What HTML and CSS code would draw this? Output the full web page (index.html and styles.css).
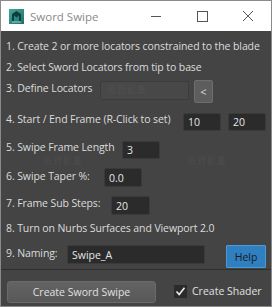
FILE: index.html
```html
<!DOCTYPE html>
<html>
<head>
<meta charset="utf-8">
<link rel="stylesheet" href="styles.css">
</head>
<body>
<div class="window">
  <div class="titlebar">
    <svg class="appicon" width="15" height="15" viewBox="0 0 15 15">
      <defs>
        <linearGradient id="g" x1="0" y1="0" x2="1" y2="1">
          <stop offset="0" stop-color="#3fa9a0"/>
          <stop offset="1" stop-color="#1f6e6a"/>
        </linearGradient>
      </defs>
      <rect width="15" height="15" fill="url(#g)"/>
      <path d="M3 12 V5 L7.5 2 L12 5 V12 H10 V6.5 L7.5 8.5 L5 6.5 V12 Z" fill="#143c3a"/>
      <rect x="3" y="12.5" width="9" height="1" fill="#8fd0c8"/>
    </svg>
    <span class="title">Sword Swipe</span>
    <div class="controls">
      <span class="ctl"><svg width="12" height="12" viewBox="0 0 12 12"><path d="M1 6.5 H11" stroke="#555" stroke-width="1"/></svg></span>
      <span class="ctl"><svg width="12" height="12" viewBox="0 0 12 12"><rect x="1.5" y="1.5" width="10" height="10" fill="none" stroke="#555" stroke-width="1"/></svg></span>
      <span class="ctl"><svg width="12" height="12" viewBox="0 0 12 12"><path d="M1 1 L11 11 M11 1 L1 11" stroke="#555" stroke-width="1"/></svg></span>
    </div>
  </div>
  <div class="body">
    <div class="row r1"><span class="lbl">1. Create 2 or more locators constrained to the blade</span></div>
    <div class="row r2"><span class="lbl">2. Select Sword Locators from tip to base</span></div>
    <div class="row r3">
      <span class="lbl w3">3. Define Locators</span>
      <span class="field loc"></span>
      <span class="btn small">&lt;</span>
    </div>
    <div class="row r4">
      <span class="lbl w4">4. Start / End Frame (R-Click to set)</span>
      <span class="field num">10</span>
      <span class="field num second">20</span>
    </div>
    <div class="row r5">
      <span class="lbl w5">5. Swipe Frame Length</span>
      <span class="field num">3</span>
    </div>
    <div class="row r6">
      <span class="lbl w6">6. Swipe Taper %:</span>
      <span class="field num">0.0</span>
    </div>
    <div class="row r7">
      <span class="lbl w7">7. Frame Sub Steps:</span>
      <span class="field num">20</span>
    </div>
    <div class="row r8"><span class="lbl">8. Turn on Nurbs Surfaces and Viewport 2.0</span></div>
    <div class="row r9">
      <span class="lbl w9">9. Naming:</span>
      <span class="field name">Swipe_A</span>
      <span class="btn help">Help</span>
    </div>
    <div class="sep"></div>
    <div class="bottom">
      <span class="btn create">Create Sword Swipe</span>
      <span class="check">
        <svg width="13" height="13" viewBox="0 0 13 13"><rect x="0" y="0" width="13" height="13" fill="#2b2b2b"/><path d="M2.5 6.5 L5.2 9.5 L10.5 2.8" stroke="#eee" stroke-width="1.6" fill="none"/></svg>
        <span>Create Shader</span>
      </span>
    </div>
    <span class="wm wm1">暇野動畫</span>
    <span class="wm wm2">暇野動畫</span>
    <span class="wm wm3">暇野動畫</span>
  </div>
</div>
</body>
</html>
```
FILE: styles.css
```css
html, body { margin: 0; padding: 0; }
body {
  width: 272px; height: 307px; overflow: hidden;
  font-family: "Open Sans", "Noto Sans", sans-serif;
}
.window {
  width: 272px; height: 307px; box-sizing: border-box;
  border: 1px solid #8a8a8a;
  display: flex; flex-direction: column;
  background: #444444;
}
.titlebar {
  height: 30px; background: #ffffff;
  display: flex; align-items: center;
  flex: none;
}
.appicon { margin-left: 8px; margin-top: 1px; }
.title {
  margin-left: 6px; font-size: 11.5px; color: #8a8a8a;
}
.controls { margin-left: auto; display: flex; }
.ctl { width: 46px; display: flex; justify-content: center; align-items: center; height: 30px; }
.body {
  position: relative; flex: 1;
  padding-left: 5px;
  color: #dcdcdc;
  font-size: 10.5px;
}
.row { display: flex; align-items: flex-start; }
.lbl { line-height: 20px; white-space: nowrap; flex: none; letter-spacing: -0.1px; }
.r1 { margin-top: 5px; height: 20px; }
.r2 { margin-top: 1px; height: 20px; }
.r3 { margin-top: 1px; height: 25px; }
.r4 { margin-top: 6px; height: 22px; }
.r5 { margin-top: 6px; height: 22px; }
.r6 { margin-top: 7px; height: 21px; }
.r7 { margin-top: 6px; height: 22px; }
.r8 { margin-top: 3px; height: 20px; }
.r9 { margin-top: 5px; height: 25px; }
.w3 { width: 94px; }
.w4 { width: 177px; }
.w5 { width: 116px; }
.w6 { width: 98px; }
.w7 { width: 105px; }
.w9 { width: 61px; }
.field {
  box-sizing: border-box; background: #2b2b2b;
  border: 1px solid #3a3a3a; border-radius: 2px;
  color: #e6e6e6; font-size: 10.5px; line-height: 17px;
  padding-left: 4px; flex: none;
}
.loc { width: 89px; height: 19px; margin-top: 3px; background: #484848; border-color: #3c3c3c; }
.num { width: 38px; height: 18px; margin-top: 4px; }
.r6 .num, .r7 .num { height: 19px; margin-top: 2px; line-height: 19px; }
.r7 .num { margin-top: 3px; width: 39px; }
.second { margin-left: 7px; }
.name { width: 138px; height: 19px; margin-top: 2px; line-height: 18px; }
.btn {
  box-sizing: border-box; display: flex; align-items: center; justify-content: center;
  flex: none;
}
.small {
  width: 19px; height: 23px; margin-top: 2px; margin-left: 5px;
  background: #5d5d5d; border: 1px solid #6e6e6e; border-radius: 2px;
  color: #dddddd; font-size: 11px;
}
.help {
  width: 40px; height: 23px; margin-top: 2px; margin-left: 21px;
  background: #2f7fc1; border: 1px solid #4a9ad8; border-radius: 1px;
  color: #1a1a1a; font-size: 10.5px;
}
.sep { height: 1px; background: #2e2e2e; margin-left: -5px; margin-top: 1px; }
.bottom { display: flex; align-items: flex-start; margin-top: 11px; }
.create {
  width: 149px; height: 22px; margin-left: 1px;
  background: linear-gradient(#636363, #585858);
  border: 1px solid #6a6a6a; border-radius: 3px;
  color: #e0e0e0; font-size: 10.5px;
}
.check { display: flex; align-items: center; margin-left: 18px; margin-top: 3px; gap: 5px; font-size: 10.5px; color: #e0e0e0; }
.wm {
  position: absolute; font-family: "Noto Sans CJK TC", sans-serif;
  font-size: 9px; line-height: 10px; color: rgba(255,255,255,0.06); letter-spacing: 1px;
}
.wm1 { left: 106px; top: 54px; }
.wm2 { left: 42px; top: 125px; }
.wm3 { left: 186px; top: 125px; }
```
